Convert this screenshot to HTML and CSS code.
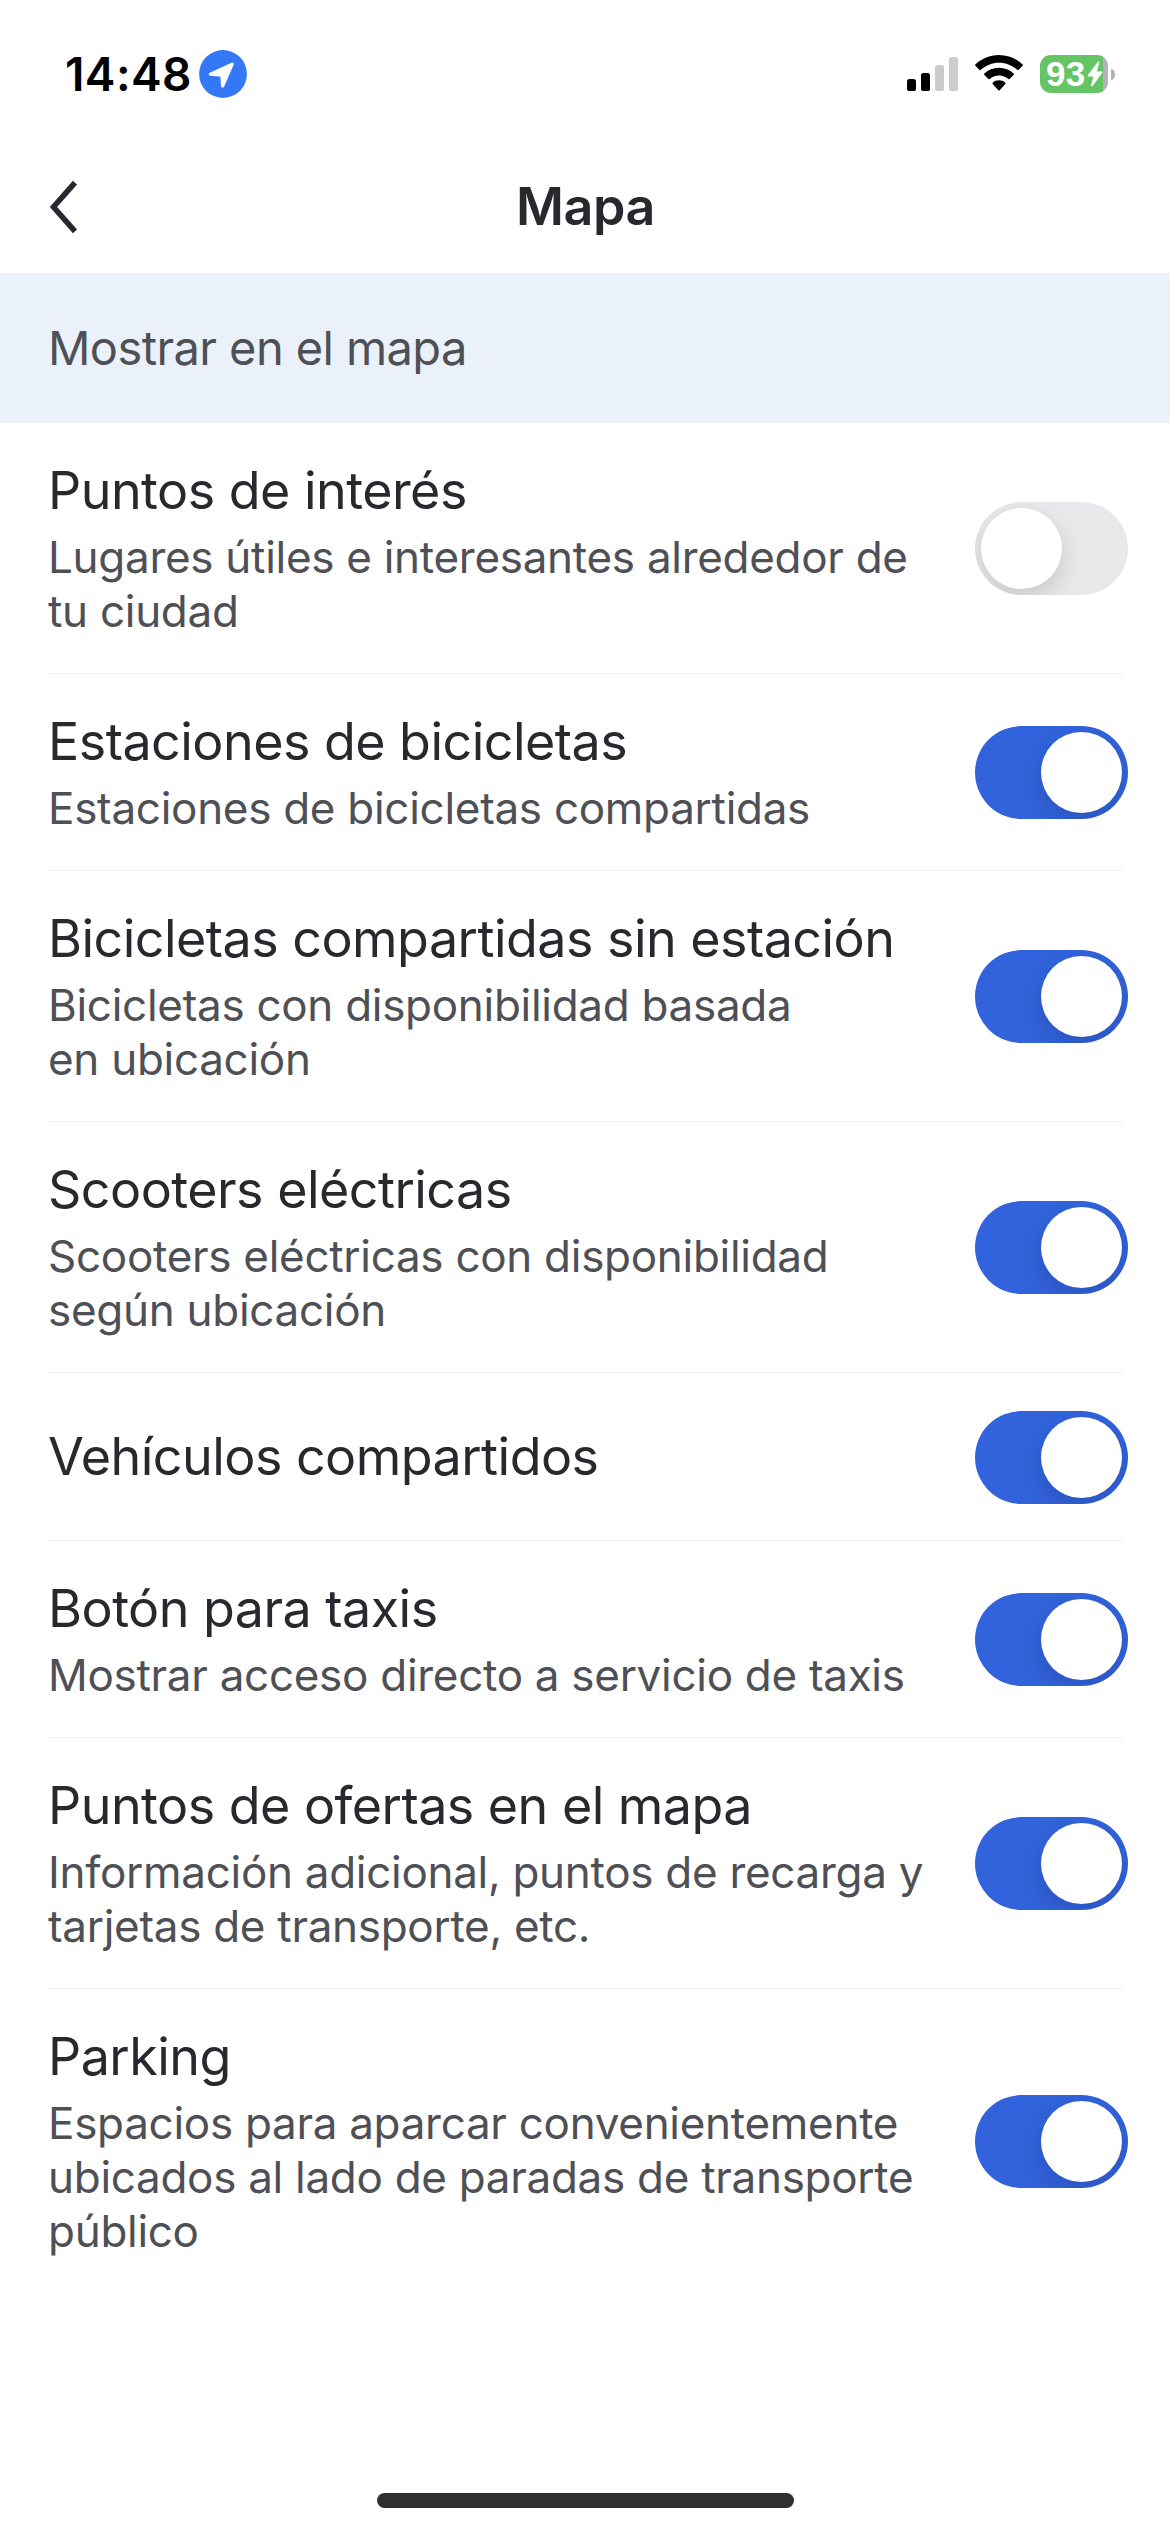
FILE: index.html
```
<!DOCTYPE html>
<html lang="es">
<head>
<meta charset="utf-8">
<title>Mapa</title>
<link rel="stylesheet" href="styles.css">
</head>
<body>
<div class="screen">
  <div class="status">
    <div class="status-left">
      <span class="time">14:48</span>
      <svg class="location" width="48" height="48" viewBox="0 0 48 48">
        <circle cx="24" cy="24" r="23.9" fill="#3478f6"/>
        <path d="M33.2 14.2 L11.4 24.2 L22.9 25.2 L23.6 36 Z" fill="#fff" stroke="#fff" stroke-width="3.2" stroke-linejoin="round"/>
      </svg>
    </div>
    <div class="status-right">
      <svg width="51" height="34" viewBox="0 0 51 34">
        <rect x="0" y="22" width="9" height="12" rx="2.6" fill="#000"/>
        <rect x="14" y="16" width="9" height="18" rx="2.6" fill="#000"/>
        <rect x="28" y="8" width="9" height="26" rx="2.6" fill="#ccc"/>
        <rect x="42" y="0" width="9" height="34" rx="2.6" fill="#ccc"/>
      </svg>
      <svg class="wifi" width="48" height="36" viewBox="0 0 48 36">
        <path d="M24 0 C14.9 0 6.6 3.6 0.4 9.4 Q-.3 10.1 .4 10.8 L4.3 14.8 Q5 15.5 5.8 14.8 C10.6 10.4 17 7.7 24 7.7 C31 7.7 37.4 10.4 42.2 14.8 Q43 15.5 43.7 14.8 L47.6 10.8 Q48.3 10.1 47.6 9.4 C41.4 3.6 33.1 0 24 0 Z"/>
        <path d="M24 12.7 C18.4 12.7 13.2 14.9 9.3 18.4 Q8.5 19.1 9.2 19.8 L13.2 23.8 Q13.9 24.5 14.7 23.9 C17.2 21.7 20.4 20.4 24 20.4 C27.6 20.4 30.8 21.7 33.3 23.9 Q34.1 24.5 34.8 23.8 L38.8 19.8 Q39.5 19.1 38.7 18.4 C34.8 14.9 29.6 12.7 24 12.7 Z"/>
        <path d="M24 25.3 C21.6 25.3 19.5 26.1 17.9 27.4 Q17 28.1 17.7 28.9 L23.3 35.2 Q24 36 24.7 35.2 L30.3 28.9 Q31 28.1 30.1 27.4 C28.5 26.1 26.4 25.3 24 25.3 Z"/>
      </svg>
      <div class="battery">
        <div class="battery-body">
          <span class="level">93</span>
          <svg width="16" height="26" viewBox="0 0 16 26">
            <path d="M11.2 .8 L1 14.3 Q.6 15.2 1.5 15.2 H6.8 L4.3 24.4 Q4.5 25.7 5.4 24.9 L15 11.7 Q15.5 10.7 14.6 10.7 H9.4 L12.1 1.4 Q12 .2 11.2 .8 Z" fill="#fff" stroke="#fff" stroke-width=".6"/>
          </svg>
        </div>
        <div class="battery-cap"></div>
      </div>
    </div>
  </div>

  <header class="nav">
    <svg class="back" width="30" height="56" viewBox="0 0 30 56">
      <path d="M27 3.6 L5.5 28 L27 52.4" fill="none" stroke="#28292f" stroke-width="5.6"/>
    </svg>
    <h1 class="nav-title">Mapa</h1>
    <span></span>
  </header>

  <h2 class="section">Mostrar en el mapa</h2>

  <ul class="list">
    <li class="row">
      <div class="text">
        <div class="title">Puntos de interés</div>
        <div class="sub">Lugares útiles e interesantes alrededor de<br>tu ciudad</div>
      </div>
      <div class="toggle"><i class="knob"></i></div>
    </li>
    <li class="row">
      <div class="text">
        <div class="title">Estaciones de bicicletas</div>
        <div class="sub">Estaciones de bicicletas compartidas</div>
      </div>
      <div class="toggle on"><i class="knob"></i></div>
    </li>
    <li class="row">
      <div class="text">
        <div class="title">Bicicletas compartidas sin estación</div>
        <div class="sub">Bicicletas con disponibilidad basada<br>en ubicación</div>
      </div>
      <div class="toggle on"><i class="knob"></i></div>
    </li>
    <li class="row">
      <div class="text">
        <div class="title">Scooters eléctricas</div>
        <div class="sub">Scooters eléctricas con disponibilidad<br>según ubicación</div>
      </div>
      <div class="toggle on"><i class="knob"></i></div>
    </li>
    <li class="row row-single">
      <div class="text">
        <div class="title">Vehículos compartidos</div>
      </div>
      <div class="toggle on"><i class="knob"></i></div>
    </li>
    <li class="row">
      <div class="text">
        <div class="title">Botón para taxis</div>
        <div class="sub">Mostrar acceso directo a servicio de taxis</div>
      </div>
      <div class="toggle on"><i class="knob"></i></div>
    </li>
    <li class="row">
      <div class="text">
        <div class="title">Puntos de ofertas en el mapa</div>
        <div class="sub">Información adicional, puntos de recarga y<br>tarjetas de transporte, etc.</div>
      </div>
      <div class="toggle on"><i class="knob"></i></div>
    </li>
    <li class="row">
      <div class="text">
        <div class="title">Parking</div>
        <div class="sub">Espacios para aparcar convenientemente<br>ubicados al lado de paradas de transporte<br>público</div>
      </div>
      <div class="toggle on"><i class="knob"></i></div>
    </li>
  </ul>

  <div class="home-bar"></div>
</div>
</body>
</html>
```
FILE: styles.css
```
* {
  box-sizing: border-box;
}

body {
  margin: 0;
  background: #fff;
  font-family: Inter, "Liberation Sans", sans-serif;
  color: #28292f;
}

svg {
  display: block;
  flex: none;
}

.screen {
  display: flex;
  flex-direction: column;
  width: 1170px;
  height: 2532px;
  overflow: hidden;
}

/* Status bar */
.status {
  display: flex;
  justify-content: space-between;
  align-items: center;
  height: 148px;
  padding: 0 55px 0 65px;
  color: #000;
}

.status-left {
  display: flex;
  align-items: center;
  gap: 8px;
}

.time {
  width: 126px;
  font-size: 46px;
  font-weight: 600;
  line-height: 56px;
  letter-spacing: 0.4px;
  white-space: nowrap;
}

.status-right {
  display: flex;
  align-items: center;
  gap: 17px;
}

.wifi {
  margin-top: -2px;
}

.battery {
  display: flex;
  align-items: center;
  gap: 3px;
}

.battery-body {
  display: flex;
  align-items: center;
  width: 68px;
  height: 38px;
  padding-left: 6px;
  border-radius: 11px;
  background: linear-gradient(to right, #65c466 63px, #b3b3b3 63px);
}

.level {
  width: 41px;
  font-family: "Liberation Sans", Arial, sans-serif;
  font-size: 35px;
  font-weight: 700;
  line-height: 38px;
  letter-spacing: 0.4px;
  color: #fff;
}

.battery-cap {
  width: 4px;
  height: 11px;
  border-radius: 0 4px 4px 0 / 0 5.5px 5.5px 0;
  background: #b3b3b3;
}

/* Navigation bar */
.nav {
  display: grid;
  grid-template-columns: 1fr auto 1fr;
  align-items: center;
  height: 125px;
  padding: 0 48px 7px;
}

.nav-title {
  margin: 0;
  padding-left: 1px;
  font-size: 52px;
  font-weight: 600;
  line-height: 62px;
  letter-spacing: -0.4px;
}

.section {
  height: 150px;
  margin: 0;
  padding-left: 48px;
  background: #ebf1fa;
  color: #4f5055;
  font-size: 47px;
  font-weight: 400;
  line-height: 150px;
  letter-spacing: -0.59px;
}

/* Settings list */
.list {
  margin: 0;
  padding: 0;
  list-style: none;
}

.row {
  display: flex;
  align-items: center;
  justify-content: space-between;
  margin: 0 48px;
  padding: 37px 0 34.55px;
  border-bottom: 1px solid #ebecec;
  white-space: nowrap;
}

.row:last-child {
  border-bottom-color: transparent;
}

.row-single {
  height: 168px;
  padding: 1px 0 0;
}

.title {
  font-size: 52px;
  line-height: 62px;
  letter-spacing: -0.53px;
}

.sub {
  margin-top: 9px;
  color: #4f5055;
  font-size: 44px;
  line-height: 53.7px;
  letter-spacing: -0.29px;
}

.toggle {
  display: flex;
  flex: none;
  width: 153px;
  height: 93px;
  margin: -11px -6px -9px 0;
  padding: 6px;
  border-radius: 46.5px;
  background: #e9e9eb;
  overflow: hidden;
}

.row-single .toggle {
  margin-top: -10px;
  margin-bottom: -10px;
}

.toggle.on {
  justify-content: flex-end;
  background: #3263dc;
}

.knob {
  width: 81px;
  height: 81px;
  border-radius: 50%;
  background: #fff;
  box-shadow: 0 9px 24px rgba(0, 0, 0, 0.15);
}

.home-bar {
  width: 417px;
  height: 15px;
  margin: auto auto 24px;
  border-radius: 7.5px;
  background: #2f2f2f;
}
```
